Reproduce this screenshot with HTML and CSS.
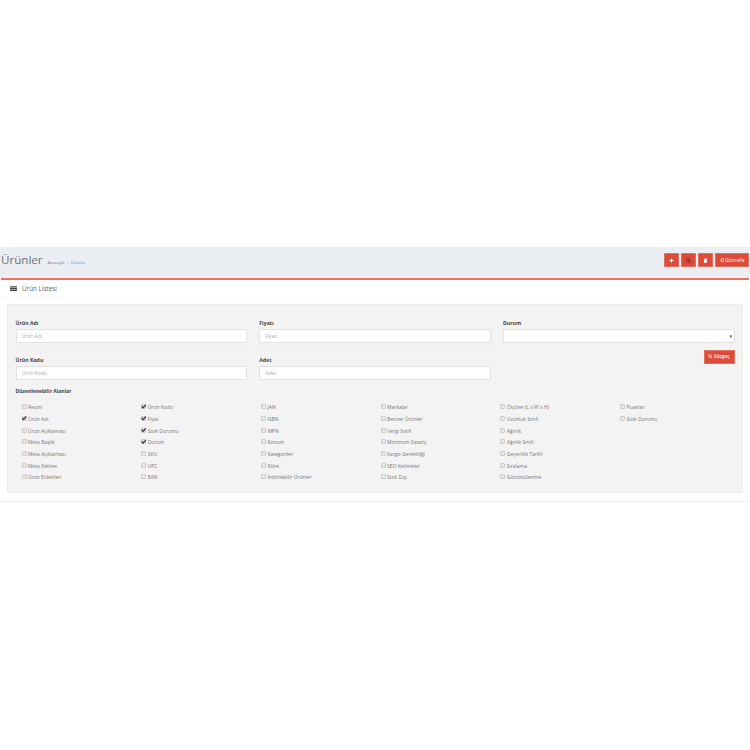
FILE: index.html
```html
<!DOCTYPE html>
<html lang="tr">
<head>
<meta charset="utf-8">
<title>Ürünler</title>
<link rel="stylesheet" href="styles.css">
</head>
<body>
<div class="page">
  <header class="head">
    <div class="head-left">
      <h1 class="title">Ürünler</h1>
      <span class="crumb">Anasayfa</span><span class="sep">/</span><span class="crumb crumb-active">Ürünler</span>
    </div>
    <div class="head-actions">
      <button class="btn btn-icon"><svg viewBox="0 0 10 10" class="ico"><path d="M4 1h2v3h3v2H6v3H4V6H1V4h3z" fill="#fff"/></svg></button>
      <button class="btn btn-icon btn-wide"><svg viewBox="0 0 10 10" class="ico"><path d="M1 1h5v5H1zM4 4h5v5H4z" fill="none" stroke="#8c2a20" stroke-width="1.2"/></svg></button>
      <button class="btn btn-icon btn-wide"><svg viewBox="0 0 10 10" class="ico"><path d="M2 3h6v6.500H2zM1 1.500h8v1H1zM4 .5h2v1H4z" fill="#fff"/></svg></button>
      <button class="btn btn-text"><svg viewBox="0 0 10 10" class="ico-sm"><path d="M8.500 5a3.500 3.500 0 1 1-1-2.500M8.500 1v2.500H6" fill="none" stroke="#fff" stroke-width="1.500"/></svg>Güncelle</button>
    </div>
  </header>
  <section class="panel">
    <div class="panel-head">
      <svg viewBox="0 0 8 6" class="list-ico"><path d="M0 0h8v1.700H0zM0 2.150h8v1.700H0zM0 4.300h8V6H0z" fill="#444"/></svg>
      <span>Ürün Listesi</span>
    </div>
    <div class="well">
      <div class="filters">
        <div class="field"><label>Ürün Adı</label><input class="input" placeholder="Ürün Adı"><hr class="rule"></div>
        <div class="field"><label>Fiyatı</label><input class="input" placeholder="Fiyatı"><hr class="rule"></div>
        <div class="field"><label>Durum</label><div class="input select"><span class="caret">▾</span></div></div>
        <div class="field"><label>Ürün Kodu</label><input class="input" placeholder="Ürün Kodu"></div>
        <div class="field"><label>Adet</label><input class="input" placeholder="Adet"></div>
        <div class="field filter-btn"><button class="btn btn-search"><svg viewBox="0 0 10 10" class="ico-sm"><circle cx="4.200" cy="4.200" r="3" fill="none" stroke="#fff" stroke-width="1.500"/><path d="M6.500 6.500l3 3" stroke="#fff" stroke-width="1.800"/></svg>Süzgeç</button></div>
      </div>
      <div class="section-title">Düzenlenebilir Alanlar</div>
      <div class="checks">
        <div class="check"><span class="box"></span>Resim</div>
        <div class="check"><span class="box on"></span>Ürün Kodu</div>
        <div class="check"><span class="box"></span>JAN</div>
        <div class="check"><span class="box"></span>Markalar</div>
        <div class="check"><span class="box"></span>Ölçüler (L x W x H)</div>
        <div class="check"><span class="box"></span>Puanlar</div>
        <div class="check"><span class="box on"></span>Ürün Adı</div>
        <div class="check"><span class="box on"></span>Fiyat</div>
        <div class="check"><span class="box"></span>ISBN</div>
        <div class="check"><span class="box"></span>Benzer Ürünler</div>
        <div class="check"><span class="box"></span>Uzunluk Sınıfı</div>
        <div class="check"><span class="box"></span>Stok Durumu</div>
        <div class="check"><span class="box"></span>Ürün Açıklaması</div>
        <div class="check"><span class="box on"></span>Stok Durumu</div>
        <div class="check"><span class="box"></span>MPN</div>
        <div class="check"><span class="box"></span>Vergi Sınıfı</div>
        <div class="check"><span class="box"></span>Ağırlık</div>
        <div class="check empty"></div>
        <div class="check"><span class="box"></span>Meta Başlık</div>
        <div class="check"><span class="box on"></span>Durum</div>
        <div class="check"><span class="box"></span>Konum</div>
        <div class="check"><span class="box"></span>Minimum Sipariş</div>
        <div class="check"><span class="box"></span>Ağırlık Sınıfı</div>
        <div class="check empty"></div>
        <div class="check"><span class="box"></span>Meta Açıklaması</div>
        <div class="check"><span class="box"></span>SKU</div>
        <div class="check"><span class="box"></span>Kategoriler</div>
        <div class="check"><span class="box"></span>Kargo Gerekliliği</div>
        <div class="check"><span class="box"></span>Geçerlilik Tarihi</div>
        <div class="check empty"></div>
        <div class="check"><span class="box"></span>Meta Kelime</div>
        <div class="check"><span class="box"></span>UPC</div>
        <div class="check"><span class="box"></span>Filtre</div>
        <div class="check"><span class="box"></span>SEO Kelimeler</div>
        <div class="check"><span class="box"></span>Sıralama</div>
        <div class="check empty"></div>
        <div class="check"><span class="box"></span>Ürün Etiketleri</div>
        <div class="check"><span class="box"></span>EAN</div>
        <div class="check"><span class="box"></span>İndirilebilir Ürünler</div>
        <div class="check"><span class="box"></span>Stok Dışı</div>
        <div class="check"><span class="box"></span>Görüntülenme</div>
        <div class="check empty"></div>
      </div>
    </div>
  </section>
</div>
</body>
</html>
```
FILE: styles.css
```css
* { box-sizing: border-box; }
html, body { margin: 0; padding: 0; background: #fff; }
body { font-family: "Open Sans", sans-serif; color: #555; }
.page { padding-top: 247px; height: 750px; }
.head {
  height: 31px; background: #ebeef3; display: flex; justify-content: space-between;
  align-items: flex-start; padding: 6px 1px 0 1px;
}
.head-left { display: flex; align-items: baseline; margin-top: -2px; }
.title { margin: 0 5px 0 0; font: 400 11.600px/17px "Open Sans", sans-serif; color: #6b7178; }
.crumb { font-size: 4px; color: #777; }
.crumb-active { color: #2f8fd0; }
.sep { font-size: 4px; color: #999; margin: 0 2.500px; }
.head-actions { display: flex; gap: 2px; }
.btn {
  background: #dd4b39; border: 1px solid #e4705f; color: #fff; padding: 0; margin: 0;
  font: 400 4.800px/1 "Open Sans", sans-serif; display: flex; align-items: center; justify-content: center;
}
.btn-icon { width: 15px; height: 14px; }
.btn-wide { width: 15px; }
.btn-text { width: 34px; height: 14px; gap: 1px; }
.ico { width: 5px; height: 5px; }
.ico-sm { width: 4.500px; height: 4.500px; }
.panel { margin: 0 1px; border-top: 2px solid #f26e60; border-bottom: 1px solid #eee; height: 224px; background: #fff; }
.panel-head {
  height: 18px; border-bottom: 1px solid #f6f6f6; display: flex; align-items: center; gap: 5px;
  padding-left: 9px; font-size: 6.300px; color: #666;
}
.list-ico { width: 7px; height: 5.500px; }
.well {
  margin: 6px 6px 0; height: 189px; background: #f3f3f3; border: 1px solid #ececec; border-radius: 1px;
  padding: 14.500px 7.500px 0;
}
.filters {
  display: grid; grid-template-columns: repeat(3, 231.500px); column-gap: 12.250px;
  grid-auto-rows: 37px; height: 68px;
}
.field { display: flex; flex-direction: column; }
.field label { font-size: 5.200px; line-height: 7px; font-weight: 700; color: #444; margin-bottom: 2.500px; }
.input {
  height: 14px; width: 100%; background: #fff; border: 1px solid #e2e2e2; border-radius: 1px;
  padding: 0 5px; font: 400 5px "Open Sans", sans-serif; color: #555; outline: none; flex: none;
}
.input::placeholder { color: #aaa; }
.rule { width: 100%; margin: 6px 0 0; border: 0; border-top: 1px solid #eee; }
.select { display: flex; align-items: center; justify-content: flex-end; padding-right: 1.500px; }
.caret { font: 5px "DejaVu Sans", sans-serif; color: #444; }
.filter-btn { align-items: flex-end; margin-top: -7px; }
.btn-search { width: 31px; height: 14px; gap: 1px; font-weight: 600; }
.section-title { font-size: 5px; line-height: 7px; font-weight: 700; color: #444; }
.checks {
  display: grid; grid-template-columns: repeat(6, 119.700px); grid-auto-rows: 11.700px; margin-top: 7.500px; padding-left: 6px;
}
.check { display: flex; align-items: center; gap: 1.500px; font-size: 5px; line-height: 7px; color: #777; white-space: nowrap; }
.box {
  width: 5px; height: 5px; border: 1px solid #ccc; border-radius: 1px; background: #e8e8e8; flex: none; margin-top: -2px; position: relative;
}
.box.on { background: #ddd; }
.box.on::after {
  content: ""; position: absolute; left: -1px; top: -1px; width: 5px; height: 5px; background: #333;
  clip-path: polygon(0 50%, 20% 30%, 40% 55%, 85% 0, 100% 20%, 40% 90%);
}
```
